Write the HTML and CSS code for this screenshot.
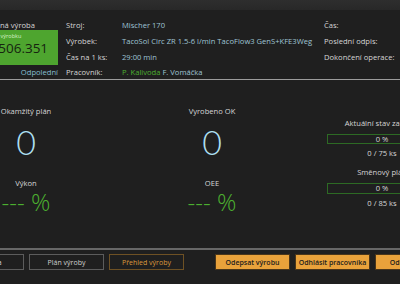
FILE: index.html
```
<!DOCTYPE html>
<html lang="cs">
<head>
    <meta charset="UTF-8">
    <title>Výroba - Mischer 170</title>
    <link rel="stylesheet" href="styles.css">
</head>
<body>
<div class="app">
    <div class="topbar"></div>

    <!-- Hlavička -->
    <header class="info">
        <div class="lot">
            <div class="lot-title">Plánovaná výroba</div>
            <div class="lot-box">
                <div class="lot-label">Číslo výrobku</div>
                <div class="lot-value">1 506.351</div>
            </div>
            <div class="shift">Odpolední</div>
        </div>
        <div class="fields">
            <span class="label">Stroj:</span><span class="value">Mischer 170</span>
            <span class="label">Výrobek:</span><span class="value">TacoSol Circ ZR 1.5-6 l/min TacoFlow3 GenS+KFE3Weg</span>
            <span class="label">Čas na 1 ks:</span><span class="value">29:00 min</span>
            <span class="label">Pracovník:</span><span class="value"><span class="worker">P. Kalivoda</span> F. Vomáčka</span>
        </div>
        <div class="fields times">
            <span class="label">Čas:</span><span class="value"></span>
            <span class="label">Poslední odpis:</span><span class="value"></span>
            <span class="label">Dokončení operace:</span><span class="value"></span>
        </div>
    </header>

    <!-- Ukazatele -->
    <main class="stats">
        <div class="stat">
            <div class="stat-label">Okamžitý plán</div>
            <div class="stat-big">0</div>
            <div class="stat-label">Výkon</div>
            <div class="stat-pct">--- %</div>
        </div>
        <div class="stat">
            <div class="stat-label">Vyrobeno OK</div>
            <div class="stat-big">0</div>
            <div class="stat-label">OEE</div>
            <div class="stat-pct">--- %</div>
        </div>
        <div class="progress">
            <div class="progress-title">Aktuální stav zakázky</div>
            <div class="bar"><span>0 %</span></div>
            <div class="progress-count">0 / 75 ks</div>
            <div class="progress-title second">Směnový plán</div>
            <div class="bar"><span>0 %</span></div>
            <div class="progress-count">0 / 85 ks</div>
        </div>
    </main>

    <!-- Tlačítka -->
    <footer class="actions">
        <button class="btn">Odstávka</button>
        <button class="btn">Plán výroby</button>
        <button class="btn outline">Přehled výroby</button>
        <button class="btn primary gap">Odepsat výrobu</button>
        <button class="btn primary">Odhlásit pracovníka</button>
        <button class="btn primary">Odhlásit stroj</button>
    </footer>
</div>
</body>
</html>
```

FILE: styles.css
```
html, body {
    margin: 0;
    height: 100%;
    overflow: hidden;
    background-color: #1f1f1f;
}
body {
    font-family: "Open Sans", "Noto Sans", sans-serif;
    font-size: 7.6px;
    color: #d6d6d6;
}
.app {
    width: 560px;
    margin-left: -70px;
}
.topbar {
    height: 10px;
    background: linear-gradient(#2e2e2e, #282828);
}

/* hlavička */
.info {
    display: flex;
    padding-top: 7px;
    border-bottom: 1px solid #9c9c9c;
}
.lot {
    width: 86px;
    margin-left: 42px;
    margin-right: 8px;
}
.lot-title {
    line-height: 16px;
}
.lot-box {
    height: 35px;
    margin-top: -3px;
    padding: 2px 3px 2px 15px;
    box-sizing: border-box;
    background-color: #4ea52f;
}
.lot-label {
    font-size: 5.5px;
    line-height: 8px;
    color: #d8f0c8;
}
.lot-value {
    font-size: 13.5px;
    line-height: 16px;
    color: #16240f;
}
.shift {
    line-height: 14px;
    text-align: right;
    color: #86bfd2;
}
.fields {
    display: grid;
    grid-template-columns: 56px 202px;
    grid-template-rows: 16px 16px 16px 14px;
    align-items: center;
}
.fields .value {
    color: #9fc4d4;
    white-space: nowrap;
}
.worker {
    color: #4caf30;
}
.times {
    grid-template-columns: 80px 60px;
}

/* ukazatele */
.stats {
    display: grid;
    grid-template-columns: 192px 180px 160px;
    height: 170px;
    padding-top: 25px;
    box-sizing: border-box;
    border-bottom: 2px solid #676767;
}
.stat {
    text-align: center;
}
.stat-label {
    line-height: 12px;
}
.stat-big {
    font-family: Lato, sans-serif;
    font-size: 34px;
    font-weight: 300;
    line-height: 42px;
    margin: 4px 0 14px;
    color: #addff0;
}
.stat-pct {
    font-size: 24px;
    font-weight: 300;
    line-height: 26px;
    color: #4caf30;
}
.progress {
    padding-top: 12px;
    display: flex;
    flex-direction: column;
    align-items: center;
}
.progress-title {
    line-height: 12px;
}
.progress-title.second {
    margin-top: 6px;
}
.bar {
    width: 110px;
    height: 10px;
    margin-top: 5px;
    box-sizing: border-box;
    border: 1px solid #2d6a24;
    text-align: center;
    line-height: 8px;
}
.bar + .progress-count ~ .bar {
    height: 11px;
}
.progress-count {
    line-height: 14px;
    margin-top: 2px;
}

/* tlačítka */
.actions {
    display: flex;
    gap: 5px;
    padding: 4px 0 0 19px;
}
.btn {
    width: 75px;
    height: 16px;
    padding: 0;
    font-family: inherit;
    font-size: 7px;
    color: #cfcfcf;
    background-color: #1f1f1f;
    border: 1px solid #5c5c5c;
}
.btn.outline {
    color: #dc9a3c;
    border-color: #6e5124;
}
.btn.primary {
    color: #1c1c1c;
    font-weight: 600;
    background-color: #e9a23b;
    border-color: #4a361a;
}
.btn.gap {
    margin-left: 26px;
}
```
